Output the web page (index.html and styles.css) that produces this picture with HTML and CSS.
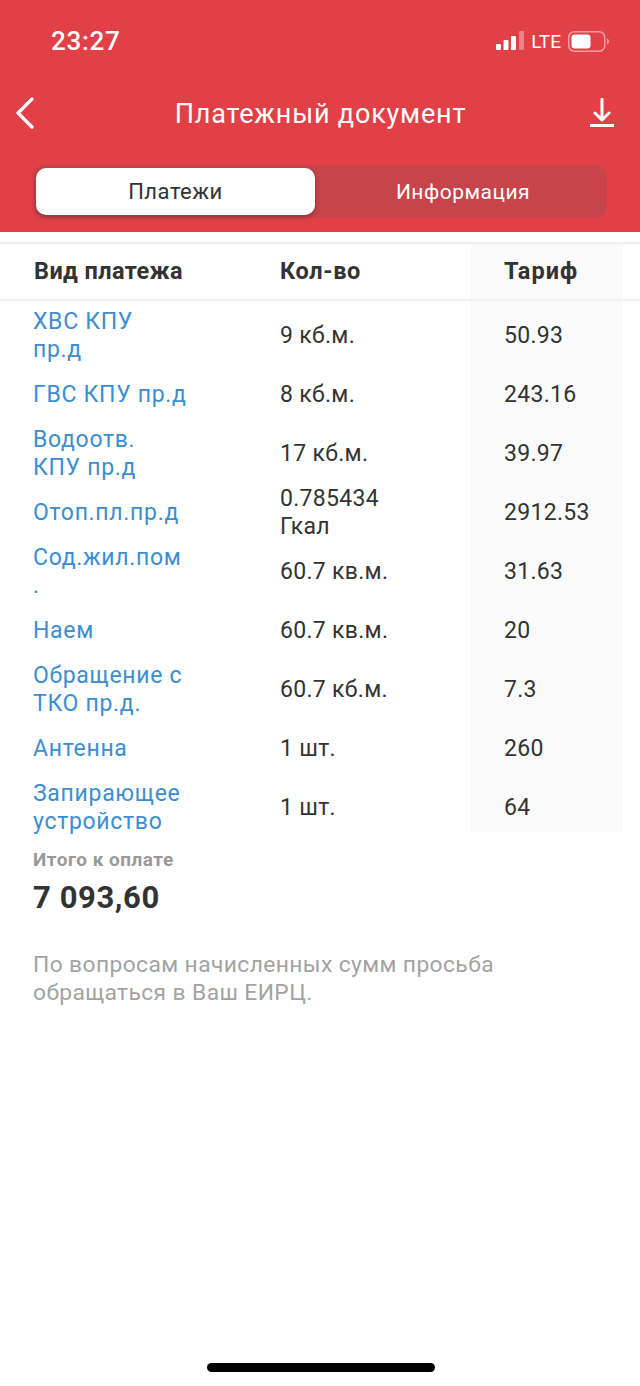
FILE: index.html
```html
<!DOCTYPE html>
<html lang="en">
<head>
  <meta charset="UTF-8" />
  <title>Платежный документ</title>
  <link rel="stylesheet" href="styles.css">
</head>
<body>
  <div class="page">
    <header class="top">
      <div class="status">
        <span class="time">23:27</span>
        <div class="status-right">
          <svg class="signal" width="28" height="20" viewBox="0 0 28 20">
            <rect x="0" y="13" width="5" height="6" rx="1" fill="#fff"/>
            <rect x="7.5" y="9" width="5" height="10" rx="1" fill="#fff"/>
            <rect x="15" y="5" width="5" height="14" rx="1" fill="#fff"/>
            <rect x="23" y="0" width="5" height="19" rx="1" fill="#fff" opacity="0.35"/>
          </svg>
          <span class="lte">LTE</span>
          <svg class="battery" width="41" height="21" viewBox="0 0 41 21">
            <rect x="0.75" y="0.75" width="36" height="19.5" rx="5.5" fill="none" stroke="#fff" stroke-opacity="0.5" stroke-width="1.5"/>
            <rect x="3.5" y="3.5" width="19" height="14" rx="3" fill="#fff"/>
            <path d="M39 7.5c1.2.4 2 1.6 2 3s-.8 2.600-2 3z" fill="#fff" opacity="0.5"/>
          </svg>
        </div>
      </div>
      <nav class="navbar">
        <svg class="back" width="19" height="32" viewBox="0 0 19 32">
          <path d="M17 2 3 16l14 14" fill="none" stroke="#fff" stroke-width="3.2" stroke-linecap="round" stroke-linejoin="round"/>
        </svg>
        <h1 class="title">Платежный документ</h1>
        <svg class="download" width="24" height="30" viewBox="0 0 24 30">
          <path d="M12 1v21M5 15l7 7 7-7" fill="none" stroke="#fff" stroke-width="3" stroke-linecap="round" stroke-linejoin="round"/>
          <rect x="0" y="26" width="24" height="3" fill="#fff"/>
        </svg>
      </nav>
      <div class="tabs">
        <div class="tab active">Платежи</div>
        <div class="tab">Информация</div>
      </div>
    </header>

    <div class="table">
      <div class="row head">
        <div class="c1">Вид платежа</div>
        <div class="c2">Кол-во</div>
        <div class="c3">Тариф</div>
      </div>
      <div class="row first">
        <div class="c1"><a>ХВС КПУ<br>пр.д</a></div>
        <div class="c2">9 кб.м.</div>
        <div class="c3">50.93</div>
      </div>
      <div class="row">
        <div class="c1"><a>ГВС КПУ пр.д</a></div>
        <div class="c2">8 кб.м.</div>
        <div class="c3">243.16</div>
      </div>
      <div class="row">
        <div class="c1"><a>Водоотв.<br>КПУ пр.д</a></div>
        <div class="c2">17 кб.м.</div>
        <div class="c3">39.97</div>
      </div>
      <div class="row">
        <div class="c1"><a>Отоп.пл.пр.д</a></div>
        <div class="c2">0.785434<br>Гкал</div>
        <div class="c3">2912.53</div>
      </div>
      <div class="row">
        <div class="c1"><a>Сод.жил.пом<br>.</a></div>
        <div class="c2">60.7 кв.м.</div>
        <div class="c3">31.63</div>
      </div>
      <div class="row">
        <div class="c1"><a>Наем</a></div>
        <div class="c2">60.7 кв.м.</div>
        <div class="c3">20</div>
      </div>
      <div class="row">
        <div class="c1"><a>Обращение с<br>ТКО пр.д.</a></div>
        <div class="c2">60.7 кб.м.</div>
        <div class="c3">7.3</div>
      </div>
      <div class="row">
        <div class="c1"><a>Антенна</a></div>
        <div class="c2">1 шт.</div>
        <div class="c3">260</div>
      </div>
      <div class="row last">
        <div class="c1"><a>Запирающее<br>устройство</a></div>
        <div class="c2">1 шт.</div>
        <div class="c3">64</div>
      </div>
    </div>

    <section class="total">
      <div class="total-label">Итого к оплате</div>
      <div class="total-sum">7 093,60</div>
      <p class="note">По вопросам начисленных сумм просьба<br>обращаться в Ваш ЕИРЦ.</p>
    </section>

    <div class="home-bar"></div>
  </div>
</body>
</html>
```

FILE: styles.css
```css
* {
  box-sizing: border-box;
}
body {
  margin: 0;
  font-family: Roboto, "Noto Sans", sans-serif;
  color: #333;
  background: #fff;
}
.page {
  width: 640px;
  height: 1386px;
  display: flex;
  flex-direction: column;
  overflow: hidden;
}

.top {
  height: 232px;
  background: #e04046;
  color: #fff;
  padding-top: 27px;
}
.status {
  height: 28px;
  padding: 0 31px 0 51px;
  display: flex;
  align-items: center;
  justify-content: space-between;
}
.time {
  font-size: 26px;
  font-weight: 500;
  letter-spacing: 0.7px;
}
.status-right {
  display: flex;
  align-items: center;
}
.signal {
  margin-right: 7px;
}
.lte {
  font-size: 19px;
  margin-right: 7px;
}
.navbar {
  height: 60px;
  margin-top: 28px;
  padding: 0 26px 0 15px;
  display: flex;
  align-items: center;
  justify-content: space-between;
}
.title {
  margin: 2px 0 0 17px;
  font-size: 27px;
  font-weight: 400;
  letter-spacing: 0.8px;
}
.tabs {
  width: 574px;
  height: 53px;
  margin: 22px 0 0 33px;
  padding: 3px;
  display: flex;
  background: #c7444a;
  border-radius: 12px;
}
.tab {
  flex: 1;
  display: flex;
  align-items: center;
  justify-content: center;
  padding-left: 7px;
  font-size: 21px;
  letter-spacing: 0.5px;
}
.tab.active {
  flex: 0 0 279px;
  padding-left: 0;
  font-size: 22px;
  background: #fff;
  color: #333;
  border-radius: 10px;
  box-shadow: 0 2px 5px rgba(0, 0, 0, 0.3);
}

.table {
  margin-top: 10px;
  border-top: 2px solid #f0f0f0;
}
.row {
  height: 59px;
  display: flex;
  align-items: stretch;
  font-size: 23px;
  letter-spacing: 0.3px;
  line-height: 27.5px;
}
.row.head {
  height: 57px;
  font-weight: 700;
  font-size: 23.5px;
  border-bottom: 2px solid #f2f2f2;
}
.row.head .c1 {
  padding-left: 34px;
  letter-spacing: 0.4px;
}
.row.head .c2 {
  letter-spacing: 0.65px;
}
.row.head .c3 {
  letter-spacing: 1px;
}
.row.first {
  height: 64px;
}
.row.first > div {
  padding-top: 5px;
}
.row.last {
  height: 54px;
}
.row.last > div {
  padding-top: 5px;
}
.c1, .c2, .c3 {
  display: flex;
  align-items: center;
}
.c1 {
  width: 280px;
  padding-left: 33px;
  letter-spacing: 0.7px;
}
.c2 {
  width: 191px;
}
.c3 {
  width: 152px;
  padding-left: 33px;
  background: #fafafa;
}
.row a {
  color: #3b8ed0;
}

.total {
  padding: 14px 33px 0;
}
.total-label {
  font-size: 19px;
  font-weight: 700;
  color: #999;
  letter-spacing: 0.5px;
  line-height: 27px;
}
.total-sum {
  margin-top: 8px;
  font-size: 31px;
  font-weight: 700;
  line-height: 34px;
  letter-spacing: 0.6px;
}
.note {
  margin: 36px 0 0;
  font-size: 22.8px;
  line-height: 27.5px;
  color: #a3a3a3;
  letter-spacing: 0.4px;
}

.home-bar {
  width: 228px;
  height: 9px;
  margin: auto 0 14px 207px;
  background: #000;
  border-radius: 5px;
}
```
